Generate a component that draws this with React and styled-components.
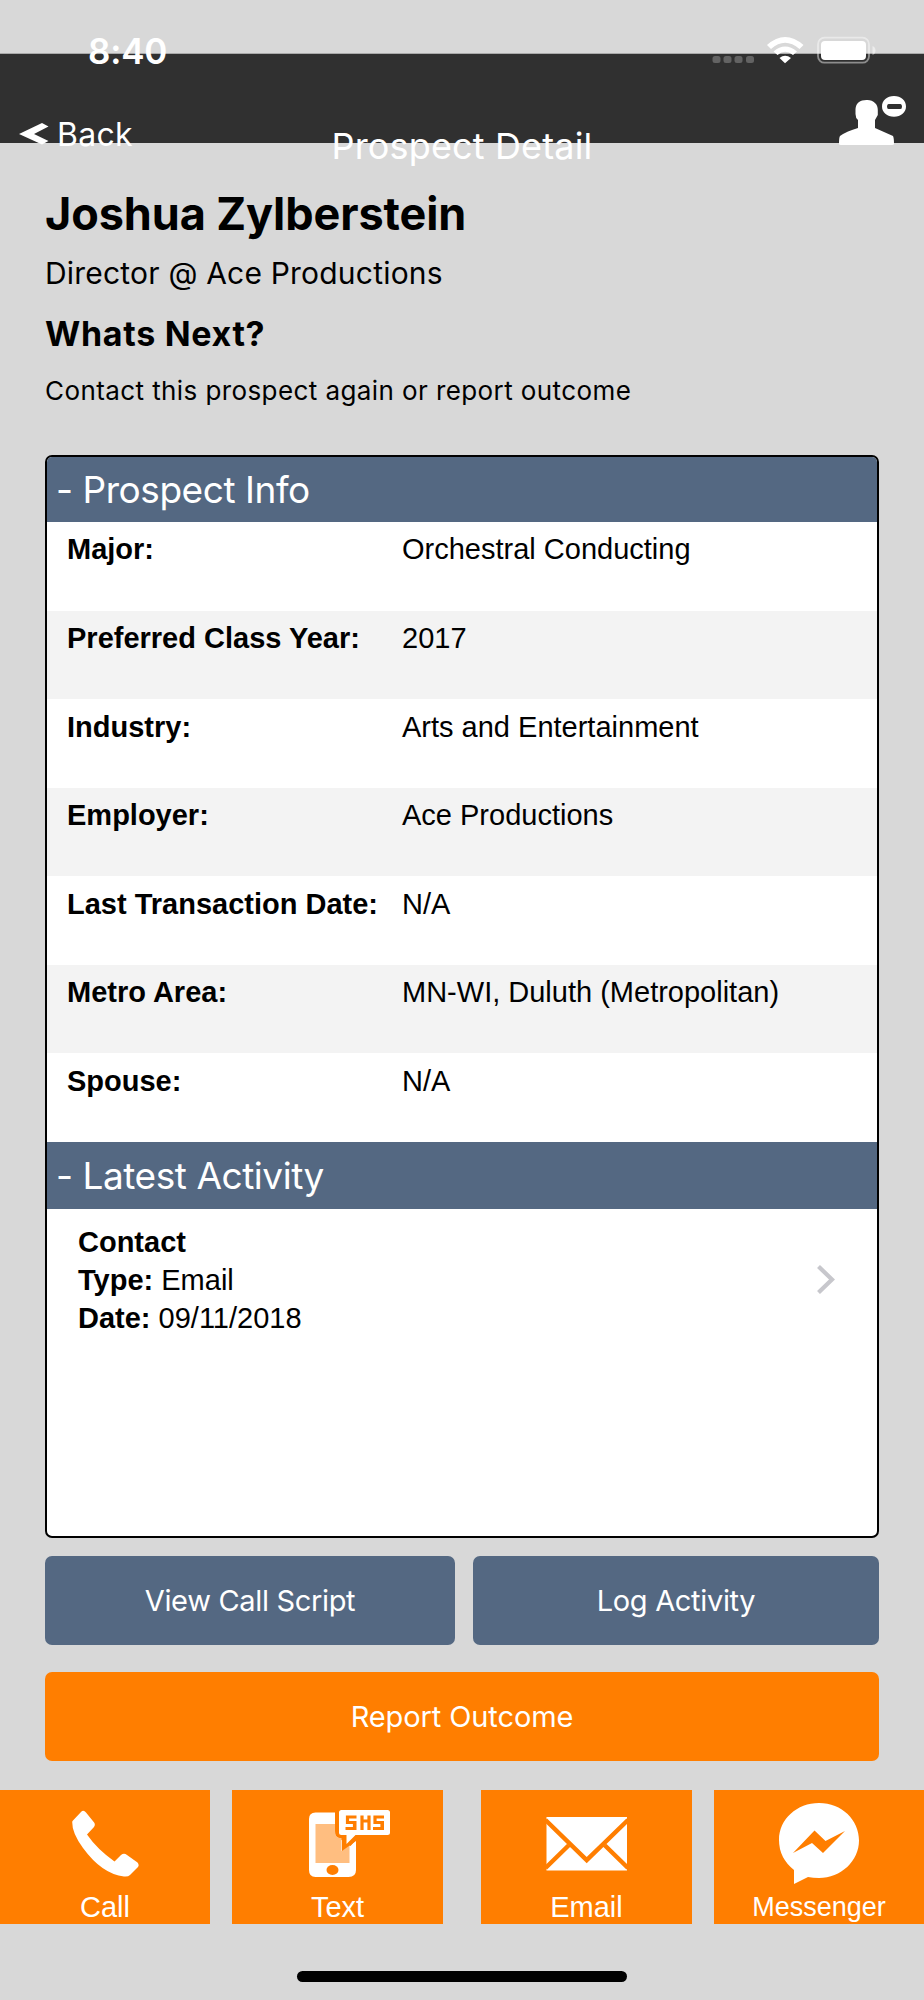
import React from 'react';
import styled, { createGlobalStyle } from 'styled-components';

const GlobalStyle = createGlobalStyle`
  * {
    box-sizing: border-box;
  }

  body {
    margin: 0;
    background: #d8d8d8;
  }

  svg {
    display: block;
  }
`;

const Screen = styled.div`
  width: 924px;
  height: 2000px;
  overflow: hidden;
  background: #d8d8d8;
  color: #000;
  font-family: Inter, "Liberation Sans", sans-serif;
`;

const TopArea = styled.header`
  height: 179px;
  background: linear-gradient(#d8d8d8 53px, #a9a9a9 53px, #a9a9a9 54px, #303030 54px, #303030 143px, #d8d8d8 143px);
  color: #fff;
`;

const StatusBar = styled.div`
  display: flex;
  justify-content: space-between;
  height: 80px;
  padding: 29px 48px 0 88px;
`;

const Clock = styled.span`
  padding-top: 1px;
  font-size: 35px;
  line-height: 42px;
  font-weight: 600;
  letter-spacing: -0.2px;
`;

const StatusIcons = styled.div`
  display: flex;
  padding-top: 7px;
`;

const NavBar = styled.nav`
  display: grid;
  grid-template-columns: 300px 1fr 300px;
  height: 99px;
`;

const BackLink = styled.div`
  display: flex;
  align-items: flex-start;
  padding: 35px 0 0 18px;

  svg {
    margin-top: 7px;
  }

  span {
    margin-left: 8px;
    font-size: 32px;
    line-height: 40px;
    letter-spacing: 0.3px;
  }
`;

const NavTitle = styled.div`
  padding-top: 44px;
  text-align: center;
  white-space: nowrap;
  font-size: 36px;
  line-height: 44px;
  letter-spacing: 0.15px;
`;

const NavAction = styled.div`
  display: flex;
  justify-content: flex-end;
  padding: 15px 17px 0 0;
`;

const Intro = styled.section`
  height: 276px;
  padding: 0 45px;
`;

const Name = styled.h1`
  margin: 0;
  padding-top: 7px;
  font-size: 45px;
  line-height: 56px;
  font-weight: 700;
  letter-spacing: -0.1px;
`;

const Role = styled.p`
  margin: 13px 0 0;
  font-size: 30px;
  line-height: 36px;
  letter-spacing: 0.2px;
`;

const NextTitle = styled.h2`
  margin: 22px 0 0;
  font-size: 34px;
  line-height: 42px;
  font-weight: 700;
  letter-spacing: 0.7px;
`;

const NextText = styled.p`
  margin: 20px 0 0;
  font-size: 26px;
  line-height: 32px;
  letter-spacing: 0.41px;
`;

const Card = styled.section`
  width: 834px;
  height: 1083px;
  margin: 0 45px;
  border: 2px solid #000;
  border-radius: 7px;
  overflow: hidden;
  background: #fff;
`;

const CardHeader = styled.div`
  height: ${props => props.$height}px;
  padding-left: 9px;
  background: #546882;
  color: #fff;
  font-size: 37px;
  line-height: ${props => props.$height}px;
  letter-spacing: -0.45px;
  white-space: pre;
`;

const InfoGrid = styled.div`
  display: grid;
  grid-template-rows: repeat(7, 1fr);
  height: 620px;
`;

const InfoRow = styled.div`
  display: grid;
  grid-template-columns: 335px 1fr;
  padding: 11.4px 0 0 20px;
  font-family: "Liberation Sans", Arial, sans-serif;
  font-size: 29px;
  line-height: 33px;

  &:nth-child(even) {
    background: #f3f3f3;
  }
`;

const Activity = styled.div`
  display: flex;
  justify-content: space-between;
  padding: 14px 42px 0 31px;
  font-family: "Liberation Sans", Arial, sans-serif;
  font-size: 29px;
  line-height: 38px;

  svg {
    margin-top: 42px;
  }
`;

const ButtonRow = styled.div`
  display: grid;
  grid-template-columns: 410px 406px;
  gap: 18px;
  margin: 18px 45px 0;
`;

const Button = styled.button`
  height: 89px;
  padding: 0;
  border: none;
  border-radius: 7px;
  background: ${props => (props.$primary ? '#ff7e00' : '#546882')};
  color: #fff;
  font-family: inherit;
  font-size: 29px;
  letter-spacing: ${props => (props.$primary ? -0.1 : -0.33)}px;
`;

const ReportRow = styled.div`
  display: grid;
  margin: 27px 45px 0;
`;

const TabBar = styled.div`
  display: flex;
  justify-content: space-between;
  height: 134px;
  margin-top: 29px;
`;

const TabPair = styled.div`
  display: grid;
  grid-template-columns: ${props => props.$columns};
  column-gap: 22px;
`;

const Tab = styled.div`
  display: flex;
  flex-direction: column;
  align-items: center;
  background: #ff7e00;
  color: #fff;
  font-family: "Liberation Sans", Arial, sans-serif;
  font-size: ${props => props.$size || 29}px;
  line-height: 32px;
`;

const HomeIndicator = styled.div`
  width: 330px;
  height: 11px;
  margin: 47px auto 0;
  border-radius: 6px;
  background: #000;
`;

const details = [
  ['Major:', 'Orchestral Conducting'],
  ['Preferred Class Year:', '2017'],
  ['Industry:', 'Arts and Entertainment'],
  ['Employer:', 'Ace Productions'],
  ['Last Transaction Date:', 'N/A'],
  ['Metro Area:', 'MN-WI, Duluth (Metropolitan)'],
  ['Spouse:', 'N/A'],
];

// signal dots, wifi and battery
const StatusGlyphs = () => (
  <svg width="166" height="30" viewBox="710 36 166 30" fill="#fff">
    <g fill="#636363">
      <rect x="712.5" y="56" width="8" height="7" rx="2.5" />
      <rect x="723.5" y="56" width="8" height="7" rx="2.5" />
      <rect x="734.5" y="56" width="8" height="7" rx="2.5" />
      <rect x="746" y="56" width="8" height="7" rx="2.5" />
    </g>
    <path d="M767 45Q785 29 803.500 45L799.500 49Q785 36.500 771 49Z" />
    <path d="M773.500 51.500Q785 41.500 797 51.500L793 55Q785 48.500 777.500 55Z" />
    <path d="M779.500 58Q785 53.500 791 58L785 63.300Z" />
    <rect x="818" y="37.700" width="51" height="25" rx="6.500" fill="none" stroke="#fff" strokeOpacity=".45" strokeWidth="1.800" />
    <rect x="821" y="41" width="45" height="19" rx="4" />
    <path d="M872.500 46Q875.500 47 875.500 50.500T872.500 55Z" opacity=".5" />
  </svg>
);

const BackArrow = () => (
  <svg width="31" height="24" viewBox="18 122 31 24" fill="#fff">
    <path d="M19 134L42 123L48.500 126.500L34 134L48.500 141L42 144.500Z" />
  </svg>
);

const RemovePerson = () => (
  <svg width="69" height="52" viewBox="838 95 69 52" fill="#fff">
    <path d="M866.500 100C873 99.500 878 104 877.800 110V115L875 120V128L893 136Q894 138 894 144Q894 145 892 145H841Q839 145 839 144Q839 137 840 136Q847 131 858 128V120Q855.500 118 855.500 114V109C856 103 860 100 866.500 100Z" />
    <path fillRule="evenodd" d="M894 96C901 96 906 100.500 906 106.500S901 116.700 894 116.700S882 112.500 882 106.500S887 96 894 96ZM888.500 104Q887 104 887 106.500Q887 109 888.500 109H900.500Q902 109 902 106.500Q902 104 900.500 104Z" />
  </svg>
);

const Chevron = () => (
  <svg width="18" height="29" viewBox="0 0 18 29">
    <path d="M1.500 1.500L15 14.500L1.500 27.500" fill="none" stroke="#c7c7cc" strokeWidth="4.200" />
  </svg>
);

// tab drawings share one canvas size so each keeps its own offset
const CallIcon = () => (
  <svg width="210" height="101" viewBox="0 1790 210 101" fill="#fff">
    <path d="M72.500 1821L81 1812Q83.500 1809.500 86 1812.500L94.500 1823Q95.500 1825 94 1827L87 1834.500Q97 1849 114.500 1861.500L121 1855Q124 1852.500 127 1855L137.500 1862.500Q139.500 1865 138 1867L130 1875Q128 1877 124 1876.500Q102 1874 83 1848Q72 1833 72.200 1822Z" />
  </svg>
);

const TextIcon = () => (
  <svg width="210" height="101" viewBox="232.5 1790 210 101" fill="#fff">
    <path d="M315 1812.500H335V1836L350 1846L355.500 1840V1870Q355.500 1877 348 1877H315Q308.500 1877 308.500 1870V1819Q308.500 1812.500 315 1812.500Z" />
    <path fill="#ffbe80" d="M315 1824H335V1834Q336 1838 341 1838V1851L349 1845V1863H315Z" />
    <ellipse cx="332" cy="1870" rx="6" ry="5" fill="#ff7e00" />
    <path fill="#ff7e00" d="M334.500 1808H341V1833L355.500 1835.500V1841L341.500 1851V1838Q334.500 1838 334.500 1831Z" />
    <path d="M341 1810H387Q389.500 1810 389.500 1812.500V1832.500Q389.500 1835 387 1835H355L346 1844V1835H341Q338.500 1835 338.500 1832.500V1812.500Q338.500 1810 341 1810Z" />
    <path fill="none" stroke="#ff7e00" strokeWidth="3.200" d="M356 1817H347V1822.500H354V1828.500H345M361.500 1830V1815.500M361.500 1821H368.500M368.500 1815.500V1830M383.500 1817H374.500V1822.500H381.500V1828.500H372.500M354.400 1821V1830M381.900 1821V1830" />
  </svg>
);

const EmailIcon = () => (
  <svg width="210" height="101" viewBox="481.5 1790 210 101">
    <rect x="546" y="1817" width="80.500" height="53.500" fill="#fff" />
    <path d="M545 1820L586.200 1860L627.500 1820M545 1868L568 1845.500M627.500 1868L604.500 1845.500" fill="none" stroke="#ff7e00" strokeWidth="4.500" />
  </svg>
);

const MessengerIcon = () => (
  <svg width="210" height="101" viewBox="714 1790 210 101">
    <path fill="#fff" d="M819 1803C842 1803 859 1820 859 1840.500S841 1878 819 1878Q813 1878 808 1877L794 1884V1870Q779 1858 779 1840C779 1819 797 1803 819 1803Z" />
    <path fill="#ff7e00" d="M793 1853L814.500 1830.500L825.500 1841L845 1831L823 1853L812 1843Z" />
  </svg>
);

export default function App() {
  return (
    <>
      <GlobalStyle />
      <Screen>
        <TopArea>
          <StatusBar>
            <Clock>8:40</Clock>
            <StatusIcons><StatusGlyphs /></StatusIcons>
          </StatusBar>
          <NavBar>
            <BackLink>
              <BackArrow />
              <span>Back</span>
            </BackLink>
            <NavTitle>Prospect Detail</NavTitle>
            <NavAction><RemovePerson /></NavAction>
          </NavBar>
        </TopArea>

        <Intro>
          <Name>Joshua Zylberstein</Name>
          <Role>Director @ Ace Productions</Role>
          <NextTitle>Whats Next?</NextTitle>
          <NextText>Contact this prospect again or report outcome</NextText>
        </Intro>

        <Card>
          <CardHeader $height={65}>- Prospect Info</CardHeader>
          <InfoGrid>
            {details.map(([label, value]) => (
              <InfoRow key={label}>
                <strong>{label}</strong>
                <span>{value}</span>
              </InfoRow>
            ))}
          </InfoGrid>
          <CardHeader $height={67}>- Latest Activity</CardHeader>
          <Activity>
            <div>
              <strong>Contact</strong>
              <div><strong>Type:</strong> Email</div>
              <div><strong>Date:</strong> 09/11/2018</div>
            </div>
            <Chevron />
          </Activity>
        </Card>

        <ButtonRow>
          <Button>View Call Script</Button>
          <Button>Log Activity</Button>
        </ButtonRow>
        <ReportRow>
          <Button $primary>Report Outcome</Button>
        </ReportRow>

        <TabBar>
          <TabPair $columns="210px 211px">
            <Tab><CallIcon />Call</Tab>
            <Tab><TextIcon />Text</Tab>
          </TabPair>
          <TabPair $columns="211px 210px">
            <Tab><EmailIcon />Email</Tab>
            <Tab $size={27}><MessengerIcon />Messenger</Tab>
          </TabPair>
        </TabBar>
        <HomeIndicator />
      </Screen>
    </>
  );
}
